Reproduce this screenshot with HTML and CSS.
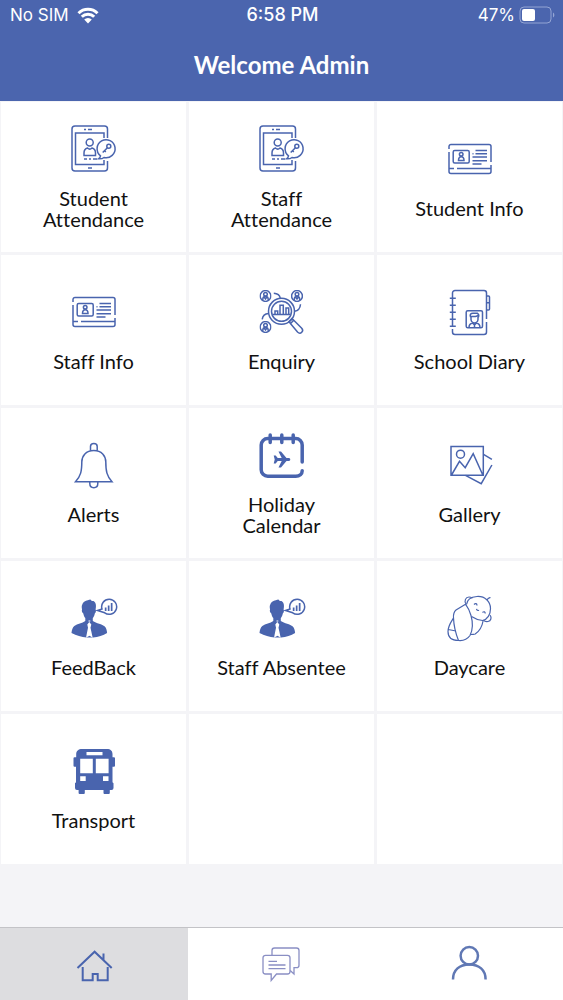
FILE: index.html
```
<!DOCTYPE html>
<html lang="en">

<head>
    <meta charset="UTF-8">
    <meta name="viewport" content="width=device-width, initial-scale=1.0">
    <title>Welcome Admin</title>
    <link rel="stylesheet" href="styles.css">
</head>

<body>
    <!-- icons used more than once -->
    <svg class="defs" width="0" height="0" aria-hidden="true">
        <symbol id="tablet" viewBox="0 0 48 48">
            <path d="M37.500 13V4a3 3 0 0 0-3-3H5a3 3 0 0 0-3 3v39a3 3 0 0 0 3 3h29.500a3 3 0 0 0 3-3v-7" />
            <path d="M34 13V8H5.500v31.500H34V35" />
            <path d="M14 4.500h2M18 4.500h4M18 43h4M14 34h3M19 34h2M23 34h4" />
            <circle cx="19.700" cy="17.500" r="3.500" />
            <path d="M14 30.500V28c0-3 1.500-4.500 3.500-5 1.500 1.500 3 1.500 4.500 0 2 .5 3.500 2 3.500 5v2.500z" />
            <path d="M30.500 30.800A9 9 0 1 1 34 32.500c-1.500 1.200-3.500 1.500-5.500 1.300 1.200-.8 1.800-1.800 2-3z" />
            <circle cx="38.800" cy="21.300" r="2" />
            <path d="M37.400 22.700l-4.700 4.800M34.500 25.700l1.300 1.300" />
        </symbol>
        <symbol id="card" viewBox="0 0 48 48">
            <path d="M3 14v-2.500a2 2 0 0 1 2-2h38a2 2 0 0 1 2 2V27M45 30v6.500a2 2 0 0 1-2 2H5a2 2 0 0 1-2-2V17" />
            <path d="M3 33.500h5M11 33.500h34" />
            <rect x="7.200" y="15.500" width="16" height="12.500" rx="1.500" />
            <circle cx="15.200" cy="19.300" r="1.800" />
            <path d="M12.500 25.500c0-5 5.500-5 5.500 0zM29.500 15.500H41M26.500 18.700h1M29.500 18.700H41M26.500 22H41M26.500 25.700H41M26.500 29h9" />
        </symbol>
        <symbol id="speaker" viewBox="0 0 48 48">
            <path class="fill" d="M12.500 10c1-3 4.500-3.500 8-4.500.5 1 1.500 1.500 3 1.500 2.800 1.500 2.800 5 2.100 8.500.8 1.500.2 3-.8 4-.4 2.500-1.500 4-2 4.500v3c3.500 2.500 9.500 3 12 5.500 1.500 1.500 2.200 4 2.300 6.500-4 2.500-9 4-14 4.500h-6.500C11.500 43 6.500 41.500 1.500 39c.3-3 1-5.500 2.800-7 3-2.300 8-2.500 11-5v-3c-1-1-1.500-2.500-2-4.500-1-1-2-2.500-1.200-4-.5-2-.6-4 .4-5.500z" />
            <path class="hole" d="M16 43.700l2-10-.7-3.200 2-2.500 2 2.500-.8 3.200 2.200 10-3.200-2z" />
            <path class="hole" d="M18.500 26.500h1.800v1h-1.800z" />
            <path d="M32 15a7.500 7.500 0 1 1 2.700 3.800l-7.200-2.300z" />
            <path class="fill" d="M34.800 13.500h1.700V17h-1.700zM37.800 11.500h1.700V17h-1.700zM40.800 9h1.700v8h-1.700z" />
        </symbol>
        <symbol id="member" viewBox="0 0 12 12">
            <circle cx="6" cy="6" r="5.400" />
            <circle cx="6" cy="4.300" r="1.800" />
            <path d="M3.300 10.500V9c0-3.500 5.400-3.500 5.400 0v1.500M5 7.500l1 1.500 1-1.500" />
        </symbol>
    </svg>

    <header class="header">
        <div class="status">
            <div class="carrier">
                <span>No SIM</span>
                <svg class="wifi" viewBox="0 0 22 17" aria-hidden="true">
                    <path d="M1.500 6.200a13.500 13.500 0 0 1 19 0M4.800 9.700a8.800 8.800 0 0 1 12.400 0" />
                    <path class="dot" d="M7.200 12.600a5.400 5.400 0 0 1 7.600 0L11 16.600z" />
                </svg>
            </div>
            <div class="time">6:58 PM</div>
            <div class="power">
                <span>47%</span>
                <svg class="battery" viewBox="0 0 36 18" aria-hidden="true">
                    <rect class="shell" x="1" y="1" width="31" height="16" rx="4" />
                    <rect class="level" x="3" y="3" width="13" height="12" rx="2" />
                    <path class="cap" d="M34 6.500c1.800.8 1.800 4.200 0 5z" />
                </svg>
            </div>
        </div>
        <h1 class="title">Welcome Admin</h1>
    </header>

    <main class="menu">
        <a class="item" href="#">
            <svg class="icon"><use href="#tablet" /></svg>
            <span>Student<br>Attendance</span>
        </a>
        <a class="item" href="#">
            <svg class="icon"><use href="#tablet" /></svg>
            <span>Staff<br>Attendance</span>
        </a>
        <a class="item" href="#">
            <svg class="icon"><use href="#card" /></svg>
            <span>Student Info</span>
        </a>
        <a class="item" href="#">
            <svg class="icon"><use href="#card" /></svg>
            <span>Staff Info</span>
        </a>
        <a class="item" href="#">
            <svg class="icon" viewBox="0 0 48 48">
                <use href="#member" x="1.500" y="2" width="12" height="12" />
                <use href="#member" x="33" y="2" width="12" height="12" />
                <use href="#member" x="1.500" y="33" width="12" height="12" />
                <circle cx="23.500" cy="23.300" r="13" />
                <circle cx="23.500" cy="23.300" r="10" />
                <path d="M14.500 26.500h18M17 26.500v-3.500h2.700v3.500M22 26.500v-9.200h3.300v9.200M28 26.500v-6.500h2.700v6.500" />
                <path d="M15.800 5.300c3.500.2 6 2 6.500 5M42.500 16.300c-.3 4-2.500 6.500-6 7M4.200 31.300c.5-3.500 3-5.500 6.300-5.700" />
                <path d="M31 33.500l3-3 1.500 2-3 3zM35 31.500l8.500 8.500c3 3-1 7-4 4l-7.500-9" />
            </svg>
            <span>Enquiry</span>
        </a>
        <a class="item" href="#">
            <svg class="icon" viewBox="0 0 48 48">
                <path d="M6.500 41v3A2.500 2.500 0 0 0 9 46.500h29a2.500 2.500 0 0 0 2.500-2.500V34M40.500 31V5A2.500 2.500 0 0 0 38 2.500H9A2.500 2.500 0 0 0 6.500 5v34" />
                <path d="M3.800 10.200h6M3.800 17.200h6M3.800 24.300h6M3.800 31.300h6M3.800 38.300h6M40.500 8h2a1 1 0 0 1 1 1v12a1 1 0 0 1-1 1h-2M40.500 14.700h3" />
                <rect x="20.200" y="22.800" width="16.300" height="17" rx="1.500" />
                <path d="M24.500 29c-1-2.500.5-4 3-3.700h4c1.500 1 1.500 2.500.8 4M24.500 28.500h5l3-1M25 29v2.500c.5 4.500 6.500 4.500 7 0V29M23 39.500c0-3 1.500-4 3.500-4.500l2 2 2-2c2 .5 3.500 1.500 3.500 4.500M28.500 37v2.500" />
            </svg>
            <span>School Diary</span>
        </a>
        <a class="item" href="#">
            <svg class="icon" viewBox="0 0 48 48">
                <path d="M20.500 9.800V5.500c0-4 6.700-4 6.700 0v4.300" />
                <path d="M23.800 9.500c-7.800 0-12 5.500-12 11.500 0 9-1 14-6.300 19.800H42C36.800 35 35.800 30 35.800 21c0-6-4.200-11.500-12-11.500z" />
                <path d="M19.800 41v1.500c0 5.500 8 5.500 8 0V41" />
            </svg>
            <span>Alerts</span>
        </a>
        <a class="item" href="#">
            <svg class="icon" viewBox="0 0 48 48">
                <path class="thick" d="M44.200 31V14a6.500 6.500 0 0 0-6.500-6.500h-28A6.500 6.500 0 0 0 3.200 14v24.700a6.500 6.500 0 0 0 6.500 6.500h28c4 0 6.500-2.500 6.500-5.500" />
                <path class="thick" d="M12.200 4v7.500M23.800 4v7.500M35.200 4v7.500" />
                <path class="fill" d="M15.700 24.500h2l2 2.500h4l-3.200-6.500h2.500l5.500 6.500h2.500c1.700 0 1.700 3 0 3h-2.500L23 36.500h-2.500l3.200-6.500h-4l-2 2.500h-2l1-4z" />
            </svg>
            <span>Holiday<br>Calendar</span>
        </a>
        <a class="item" href="#">
            <svg class="icon" viewBox="0 0 48 48">
                <path d="M5 5.500h32.300v28.700H5zM5.500 34l8-13.700 5.700 6.400 8-14L36.800 34" />
                <circle cx="14.500" cy="13.200" r="4" />
                <path d="M37.500 13.300l8.400 5M45.900 24L35.200 42.700 19.500 34.300" />
            </svg>
            <span>Gallery</span>
        </a>
        <a class="item" href="#">
            <svg class="icon"><use href="#speaker" /></svg>
            <span>FeedBack</span>
        </a>
        <a class="item" href="#">
            <svg class="icon"><use href="#speaker" /></svg>
            <span>Staff Absentee</span>
        </a>
        <a class="item" href="#">
            <svg class="icon thin" viewBox="0 0 48 48">
                <path d="M20.500 10.500C21 6 25 3 31 2.500c8-.5 13.500 5 13.500 12 0 6-3 11-8 12-4.500-.5-8-2-11-4" />
                <path d="M20 10c-2-3-.5-7 3-7 1.500 0 2.500.5 3.500 1M44 21c2 2.500 1 6-2 6.500-2 .3-3.500 0-4.500-1.500M41 6c1-2 2-2 3.500-2.500" />
                <path d="M19.500 10.200L10 16c-2.500 2-2.700 5-2.500 8 .3 8 2 15 5 22.500 5 .5 9-1.500 11.500-5 3-6 3-13 1-20-1.500-5-3-8-5.500-11.300z" />
                <path d="M7.500 24C5 28 2 32 2 37.500c0 5 3 9 10.500 9M2.300 35.500L10 37M37.200 26.500c-1 5.500-4 11-8 13.500-1.500.5-3 .5-4.500.5" />
                <path d="M28 10.500c1.500-1.500 3-1 3 1M36.500 18.500c1.500-1.500 3-.5 2.500 1M30.500 14.800c.3 1.500 1.500 2 2.500 1.500" />
            </svg>
            <span>Daycare</span>
        </a>
        <a class="item" href="#">
            <svg class="icon" viewBox="0 0 48 48">
                <path class="fill" d="M12 2h25c3.500 0 5.500 2 5.500 5v3.300h1.500a1 1 0 0 1 1 1v7.400a1 1 0 0 1-1 1h-1.500v15.500l1 1V41a2 2 0 0 1-2 2h-1.700v3a1 1 0 0 1-1 1h-4.300a1 1 0 0 1-1-1v-3H14.800v3a1 1 0 0 1-1 1H9.600a1 1 0 0 1-1-1v-3H7a2 2 0 0 1-2-2v-4.800l1-1V19.700H4.500a1 1 0 0 1-1-1v-7.400a1 1 0 0 1 1-1H6.200V7c0-3 2.300-5 5.800-5z" />
                <path class="hole" d="M16.500 5h16v3.300h-16zM10.200 11.700h12.600v14.600H10.200zM25.800 11.700h12.800v14.600H25.800zM10.200 29.200h5.500V34h-5.500zM33 29.200h5.500V34H33z" />
            </svg>
            <span>Transport</span>
        </a>
        <div class="item"></div>
        <div class="item"></div>
    </main>

    <nav class="tabs">
        <a class="tab act" href="#" aria-label="Home">
            <svg class="tab-icon" viewBox="0 0 40 40">
                <path d="M3.500 24L20.600 7.700 37.700 24M29.500 9.500v6.300M8.700 23v13.300h10V30h5v6.300h10V23" />
            </svg>
        </a>
        <a class="tab" href="#" aria-label="Messages">
            <svg class="tab-icon chat" viewBox="0 0 40 40">
                <path d="M11 11.300V6.500a2.500 2.500 0 0 1 2.500-2.500h22A2.500 2.500 0 0 1 38 6.500v14.700a2.500 2.500 0 0 1-2.500 2.500H33V30l-3.800-3.500" />
                <path d="M4.500 11.300h22a2.500 2.500 0 0 1 2.500 2.500v13.700a2.500 2.500 0 0 1-2.500 2.500H15.500L10.200 36.500V30H4.500A2.500 2.500 0 0 1 2 27.500V13.800a2.500 2.500 0 0 1 2.500-2.500z" />
                <path d="M7.500 17.300h8.500M7.500 21h17M7.500 24.700h17" />
            </svg>
        </a>
        <a class="tab" href="#" aria-label="Profile">
            <svg class="tab-icon user" viewBox="0 0 40 40">
                <circle cx="20.300" cy="11.700" r="8.700" />
                <path d="M4 35.500c0-9.500 6.500-15 16.300-15s16.300 5.500 16.300 15" />
            </svg>
        </a>
    </nav>
</body>

</html>
```
FILE: styles.css
```
* {
    margin: 0;
    padding: 0;
    box-sizing: border-box;
}

body {
    display: flex;
    flex-direction: column;
    min-height: 100vh;
    font-family: Lato, "Open Sans", sans-serif;
    font-variant-ligatures: none;
    background-color: #f4f4f7;
}

a {
    color: inherit;
    text-decoration: none;
}

svg {
    fill: none;
    stroke: #4964ae;
    flex-shrink: 0;
}

.defs {
    position: absolute;
}

.header {
    color: #fff;
    background-color: #4b65ae;
    padding-bottom: 20px;
}

.status {
    display: grid;
    grid-template-columns: 1fr auto 1fr;
    align-items: center;
    height: 30px;
    padding: 0 8px 0 10px;
    font: 17px/20px Inter, "Liberation Sans", sans-serif;
}

.carrier,
.power {
    display: flex;
    align-items: center;
}

.carrier {
    gap: 8px;
}

.power {
    justify-content: flex-end;
    gap: 4px;
}

.time {
    font-size: 18px;
    font-weight: 500;
}

.wifi {
    width: 22px;
    height: 17px;
    stroke: #fff;
    stroke-width: 3;
}

.wifi .dot {
    fill: #fff;
    stroke: none;
}

.battery {
    width: 36px;
    height: 18px;
    stroke: none;
}

.battery .shell {
    stroke: #94a5d4;
    stroke-width: 1;
}

.battery .level {
    fill: #fff;
}

.battery .cap {
    fill: #94a5d4;
}

.title {
    margin-top: 19px;
    font-size: 24px;
    line-height: 32px;
    font-weight: 700;
    text-align: center;
}

.menu {
    display: grid;
    grid-template-columns: repeat(3, 1fr);
    grid-auto-rows: minmax(150px, auto);
    gap: 3px;
    padding: 1px 1px 0;
}

.item {
    display: flex;
    flex-direction: column;
    align-items: center;
    justify-content: center;
    gap: 15px;
    color: #111;
    font-size: 20px;
    line-height: 21px;
    text-align: center;
    background-color: #fff;
}

.icon {
    width: 48px;
    height: 48px;
    stroke-width: 1.5;
}

.icon.thin {
    stroke-width: 1.2;
}

.fill {
    fill: #4964ae;
    stroke: none;
}

.hole {
    fill: #fff;
    stroke: none;
}

.thick {
    stroke-width: 3.5;
    stroke-linecap: round;
}

.tabs {
    display: grid;
    grid-template-columns: repeat(3, 1fr);
    height: 73px;
    margin-top: auto;
    background-color: #fff;
    border-top: 1px solid #c3c3c7;
}

.tab {
    display: flex;
    align-items: center;
    justify-content: center;
}

.tab.act {
    background-color: #dddde0;
}

.tab-icon {
    width: 40px;
    height: 40px;
    stroke-width: 2;
}

.tab-icon.chat {
    stroke: #8a8fc4;
    stroke-width: 1.3;
}

.tab-icon.user {
    stroke: #6078b4;
    stroke-width: 2.5;
}
```
